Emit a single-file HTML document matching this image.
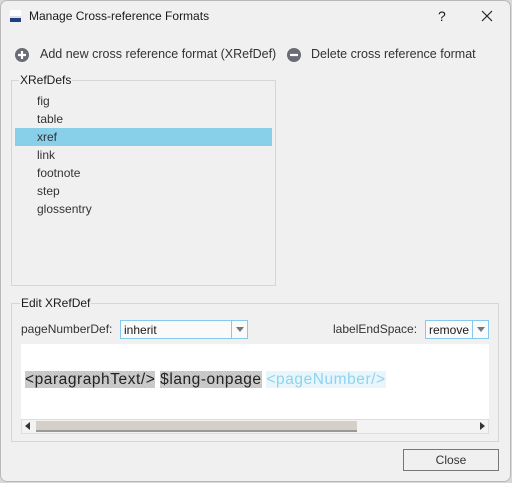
<!DOCTYPE html>
<html><head><style>
*{margin:0;padding:0;box-sizing:border-box}
html,body{width:512px;height:483px;overflow:hidden;background:#d8d8d8}
body{font-family:"Liberation Sans",sans-serif;font-size:12px;color:#1a1a1a;position:relative}
.win{position:absolute;left:0;top:0;width:511px;height:482px;background:#f0f0f0;box-shadow:inset 0 0 0 1px #b8b8b8;border-radius:7px;overflow:hidden}
.a{position:absolute;white-space:nowrap}
.grp{position:absolute;border:1px solid #d6d6d6}
.lbl{position:absolute;background:#f0f0f0;padding:0 1px}
.combo{position:absolute;border:1px solid #86c9eb;background:#fafafa;height:19px}
.combo .arr{position:absolute;right:0;top:0;width:16px;height:17px;border-left:1px solid #86c9eb}
.combo .arr:after{content:"";position:absolute;left:4px;top:6px;border-left:4px solid transparent;border-right:4px solid transparent;border-top:5px solid #777}
.hl{background-color:#bdbdbd;background-image:repeating-linear-gradient(45deg,rgba(255,255,255,.35) 0 1px,transparent 1px 2px)}
</style></head><body>
<div class="win">
 <div class="a" style="left:10px;top:10px;width:11px;height:12px;background:linear-gradient(#fff 0 6px,#e0e0e0 6px 8px,#1e3f8a 8px 11px)"></div>
 <div class="a" style="left:29px;top:9px;font-size:12px">Manage Cross-reference Formats</div>
 <div class="a" style="left:438px;top:8px;font-size:14px">?</div>
 <svg class="a" style="left:481px;top:10px" width="12" height="12"><path d="M1 1L11 11M11 1L1 11" stroke="#222" stroke-width="1.2"/></svg>

 <svg class="a" style="left:14px;top:47px" width="16" height="16"><circle cx="8" cy="8" r="7" fill="#6b6b75"/><path d="M4 8H12M8 4V12" stroke="#fff" stroke-width="2.2"/></svg>
 <div class="a" style="left:40px;top:47px;font-size:12.5px;color:#333">Add new cross reference format (XRefDef)</div>
 <svg class="a" style="left:286px;top:47px" width="16" height="16"><circle cx="8" cy="8" r="7" fill="#6b6b75"/><path d="M4 8H12" stroke="#fff" stroke-width="2.2"/></svg>
 <div class="a" style="left:311px;top:47px;font-size:12.5px;color:#333">Delete cross reference format</div>

 <div class="grp" style="left:11px;top:80px;width:265px;height:206px"></div>
 <div class="lbl a" style="left:19px;top:73px">XRefDefs</div>
 <div class="a" style="left:15px;top:128px;width:257px;height:18px;background:#88cfea"></div>
 <div class="a" style="left:37px;top:92px;line-height:18px;color:#333">fig<br>table<br>xref<br>link<br>footnote<br>step<br>glossentry</div>

 <div class="grp" style="left:11px;top:303px;width:488px;height:139px"></div>
 <div class="lbl a" style="left:20px;top:296px">Edit XRefDef</div>
 <div class="a" style="left:21px;top:322px;color:#333">pageNumberDef:</div>
 <div class="combo" style="left:120px;top:320px;width:128px"><span style="position:absolute;left:3px;top:2px">inherit</span><div class="arr"></div></div>
 <div class="a" style="left:333px;top:322px;color:#333">labelEndSpace:</div>
 <div class="combo" style="left:425px;top:320px;width:64px"><span style="position:absolute;left:3px;top:2px">remove</span><div class="arr"></div></div>
 <div class="a" style="left:21px;top:344px;width:468px;height:75px;background:#fff"></div>
 <div class="a" style="left:25px;top:371px;font-size:15.5px;letter-spacing:0.55px;line-height:18px;color:#222"><span class="hl">&lt;paragraphText/&gt;</span> <span class="hl">$lang-onpage</span> <span style="background:#e8f6fc;color:#8fd3ef">&lt;pageNumber/&gt;</span></div>
 <div class="a" style="left:21px;top:419px;width:468px;height:15px;background:#f3f3f3;border:1px solid #ddd"></div>
 <div class="a" style="left:36px;top:421px;width:321px;height:11px;background:#d4d0c8;border-bottom:2px solid #999"></div>
 <div class="a" style="left:25px;top:422px;border-top:4px solid transparent;border-bottom:4px solid transparent;border-right:5px solid #333"></div>
 <div class="a" style="left:480px;top:422px;border-top:4px solid transparent;border-bottom:4px solid transparent;border-left:5px solid #333"></div>

 <div class="a" style="left:403px;top:449px;width:96px;height:22px;border:1px solid #777;background:#f0f0f0;text-align:center;line-height:20px;color:#333">Close</div>
</div>
</body></html>
